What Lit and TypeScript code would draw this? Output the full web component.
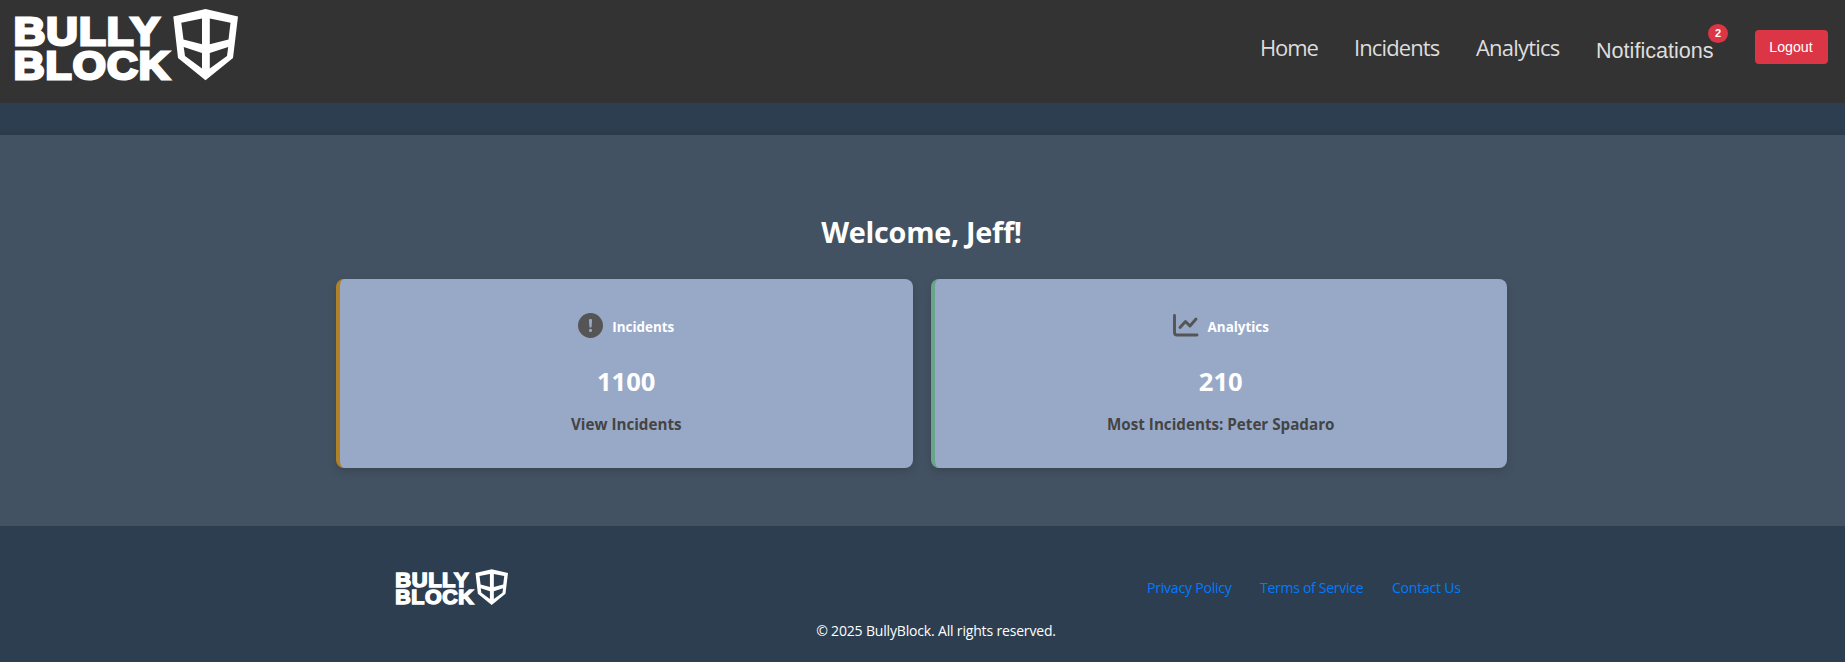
import { LitElement, html, css, svg } from "lit";
import { customElement } from "lit/decorators.js";

@customElement("bully-logo")
class BullyLogo extends LitElement {
  static styles = css`
    :host { display: block; }
    svg { display: block; width: 100%; height: 100%; overflow: visible; }
    text { font-family: "Liberation Sans", sans-serif; font-weight: 700; font-size: 39.5px; letter-spacing: 1px; fill: #fff; stroke: #fff; stroke-width: 2.9px; }
  `;
  render() {
    return html`<svg viewBox="0 0 225 73">
      <text x="-1.3" y="36.1" textLength="147" lengthAdjust="spacingAndGlyphs">BULLY</text>
      <text x="-1.3" y="70" textLength="157" lengthAdjust="spacingAndGlyphs">BLOCK</text>
      <path fill="#fff" fill-rule="evenodd" d="M190.5 0 223 7.5 218 49 190.5 71.2 163 49 158.3 7.5Z M187 9.5 166.3 13.8 168.5 30.5 187 35.3Z M194.8 9.5 215.5 13.8 213.5 30.5 194.8 35.3Z M168.7 38 187 44 187 59.5 170 47Z M213.2 38 194.8 44 194.8 59.5 212 47Z"/>
    </svg>`;
  }
}

@customElement("app-root")
class AppRoot extends LitElement {
  static styles = css`
    :host { display: block; height: 662px; background: #2c3e50; color: #fff; font-family: "Open Sans", "Noto Sans", sans-serif; overflow: hidden; }
    * { box-sizing: border-box; }
    .nav { height: 103px; background: #333; display: flex; justify-content: space-between; padding: 9px 17px 0 15px; }
    .brand { width: 225px; height: 73px; }
    .links { display: flex; height: 76px; align-items: center; color: #ddd; font-size: 22px; white-space: nowrap; }
    .link { line-height: 30px; }
    .home { width: 94px; letter-spacing: -1.1px; }
    .inc { width: 122px; letter-spacing: -0.9px; }
    .ana { width: 120px; letter-spacing: -0.8px; }
    .notif { position: relative; width: 159px; top: 4px; font: 21.6px/30px "Liberation Sans", sans-serif; }
    .badge { position: absolute; left: 112px; top: -12px; width: 20px; height: 19px; border-radius: 50%; background: #dc3545; color: #fff; font: bold 11px/19px "Liberation Sans", sans-serif; text-align: center; }
    .logout { width: 73px; height: 34px; border: 0; border-radius: 4px; background: #dc3545; color: #fff; font: 14.2px "Liberation Sans", sans-serif; padding: 0 1px 0 0; }
    .band { height: 32px; background: linear-gradient(#2c3e50 75%, #2b3a4b); }
    .main { height: 391px; background: #435262; padding: 76px 338px 0 336px; }
    h1 { margin: 0; height: 42px; line-height: 42px; font-size: 28.8px; font-weight: 700; text-align: center; letter-spacing: -0.28px; }
    .cards { display: grid; grid-template-columns: 1fr 1fr; gap: 18px; margin-top: 26px; }
    .card { height: 189px; border-radius: 8px; background: #98a9c8; border-left: 4px solid #b08228; box-shadow: 0 4px 8px rgba(0,0,0,.15); display: flex; flex-direction: column; align-items: center; }
    .green { border-left-color: #68a58b; }
    .head { margin-top: 32px; height: 32px; display: flex; align-items: center; gap: 9px; font-size: 13.4px; font-weight: 700; }
    .icon { display: block; fill: #555; margin-bottom: 3px; }
    .num { margin-top: 20px; height: 38px; line-height: 38px; font-size: 25.6px; font-weight: 700; }
    .sub { margin-top: 11px; height: 24px; line-height: 24px; font-size: 15.2px; font-weight: 700; color: #444; }
    .footer { height: 136px; padding: 43px 383px 0 396px; font-size: 14px; }
    .row { display: flex; justify-content: space-between; }
    .small { width: 113px; height: 37px; }
    .legal { display: flex; color: #007bff; line-height: 38px; white-space: nowrap; letter-spacing: -0.2px; }
    .pp { width: 113px; } .ts { width: 132px; letter-spacing: -0.28px; } .cu { width: 70px; }
    .copy { margin: 13px 0 0 14px; line-height: 22px; text-align: center; letter-spacing: -0.17px; }
  `;
  render() {
    const alert = svg`<path fill-rule="evenodd" d="M12.5 0a12.5 12.5 0 1 0 0 25 12.5 12.5 0 0 0 0-25Zm-1.6 7q0-1 1.6-1t1.6 1l-.5 7q-1.1 1-2.2 0Zm1.6 8.8a1.6 1.6 0 1 1 0 3.2 1.6 1.6 0 0 1 0-3.2Z"/>`;
    const chart = svg`<path d="M1.5 2.5V19.5a2.5 2.5 0 0 0 2.5 2.5H24M7 14.5l5.5-6 4.5 4.5 6-7" fill="none" stroke="#555" stroke-width="2.9" stroke-linecap="round" stroke-linejoin="round"/>`;
    return html`
      <nav class="nav">
        <bully-logo class="brand"></bully-logo>
        <div class="links">
          <span class="link home">Home</span><span class="link inc">Incidents</span><span class="link ana">Analytics</span>
          <span class="notif">Notifications<span class="badge">2</span></span>
          <button class="logout">Logout</button>
        </div>
      </nav>
      <div class="band"></div>
      <main class="main">
        <h1>Welcome, Jeff!</h1>
        <div class="cards">
          <section class="card">
            <div class="head"><svg class="icon" width="25" height="25" viewBox="0 0 25 25">${alert}</svg><span>Incidents</span></div>
            <div class="num">1100</div><div class="sub">View Incidents</div>
          </section>
          <section class="card green">
            <div class="head"><svg class="icon" width="26" height="25" viewBox="0 0 26 25">${chart}</svg><span>Analytics</span></div>
            <div class="num">210</div><div class="sub">Most Incidents: Peter Spadaro</div>
          </section>
        </div>
      </main>
      <footer class="footer">
        <div class="row"><bully-logo class="small"></bully-logo>
          <div class="legal"><span class="pp">Privacy Policy</span><span class="ts">Terms of Service</span><span class="cu">Contact Us</span></div>
        </div>
        <div class="copy">© 2025 BullyBlock. All rights reserved.</div>
      </footer>`;
  }
}
